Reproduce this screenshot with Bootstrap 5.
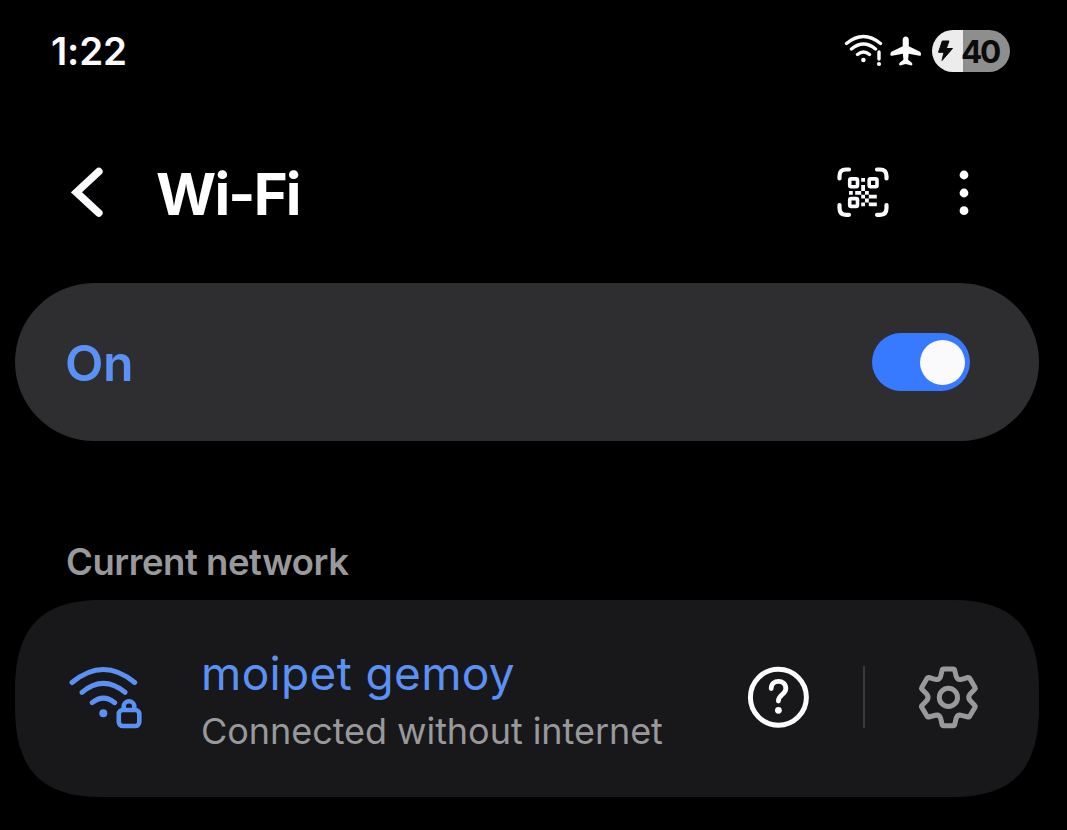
<!DOCTYPE html>
<html lang="en" data-bs-theme="dark">
<head>
<meta charset="utf-8">
<meta name="viewport" content="width=device-width, initial-scale=1">
<title>Wi-Fi</title>
<link href="https://cdn.jsdelivr.net/npm/bootstrap@5.3.0/dist/css/bootstrap.min.css" rel="stylesheet">
<style>
  body { background: #000; color: #fcfcff; font-family: Inter, "Liberation Sans", sans-serif; overflow: hidden; }
  svg { display: block; flex: none; }
  .status-bar { height: 102px; padding: 0 57px 0 51px; }
  .clock { font-size: 38.5px; font-weight: 600; letter-spacing: -.2px; padding-top: 1px; }
  .battery { width: 78px; height: 42px; padding-left: 29px; color: #0b0b0b; font-size: 31.5px; font-weight: 700; line-height: 43px; letter-spacing: -2.4px;
    background: linear-gradient(90deg, #ececec 31px, #8e8e8e 31px); position: relative; }
  .battery svg { position: absolute; left: 5px; top: 10px; }
  .app-bar { height: 181px; padding: 0 97px 0 71px; }
  .page-title { font-size: 58px; font-weight: 700; line-height: 70px; margin: 3px 0 0 52px; letter-spacing: -1.8px; }
  .switch-card { height: 158px; margin: 0 28px 0 15px; padding: 0 69px 0 50px; background: #2e2e30; border-radius: 79px; }
  .switch-label { font-size: 50px; font-weight: 600; color: #5b91f5; line-height: 60px; padding-top: 2px; letter-spacing: -.4px; }
  .toggle { width: 98px; height: 58px; background: #387aff; padding: 0 5px; }
  .knob { width: 45px; height: 45px; background: #fafafc; }
  .section-label { margin: 98px 0 0 66px; height: 61px; line-height: 46px; font-size: 36.5px; font-weight: 600; letter-spacing: -.46px; color: #99999c; }
  .network-card { height: 197px; margin: 0 28px 0 15px; padding: 0 60px 3px 54px; background: #18181a;
    clip-path: path("M0 90C0 27 27 0 86 0H938C997 0 1024 27 1024 90V107C1024 170 997 197 938 197H86C27 197 0 170 0 107Z"); }
  .network-text { margin-left: 58px; width: 548px; padding-top: 10px; }
  .network-name { font-size: 46px; line-height: 58px; color: #5b91f5; letter-spacing: .35px; }
  .network-state { font-size: 36px; line-height: 59px; color: #99999c; letter-spacing: -.05px; }
  .rule { width: 2px; height: 62px; background: #39393b; margin: 0 52px 0 54px; }
</style>
</head>
<body>
<header class="status-bar d-flex align-items-center justify-content-between">
  <div class="clock" id="clock">1:22</div>
  <div class="d-flex align-items-center">
    <svg width="40" height="36" viewBox="844 33 40 36" fill="none" stroke="#fcfcfc" stroke-width="3.400" stroke-linecap="round">
      <path d="M846.500 43.500Q863.500 29.500 880.500 43.500M851.500 49Q863.500 39 875.500 49M857.500 54.500Q863.500 49.500 869.500 54.500M879 52V59"/>
      <circle cx="863.400" cy="60" r="2.300" fill="#fcfcfc" stroke="none"/><circle cx="879" cy="64" r="2.100" fill="#fcfcfc" stroke="none"/>
    </svg>
    <svg width="34" height="36" viewBox="889 33 34 36" fill="#fcfcfc" style="margin-left:5px">
      <path d="M905.700 36.500C904 36.500 902.700 38 902.700 40V46.200L891.500 51.700Q890.200 52.700 890.300 55Q890.500 56 892 55.700L902.900 53.800L903.400 59.800L899.400 63Q898.500 65.200 900 65.500L905.700 63.900L911.500 65.500Q912.900 65.200 912.100 63L908.100 59.800L908.700 53.800L919.500 55.700Q920.900 56 921 55Q921.200 52.700 920 51.700L908.800 46.200V40C908.800 38 907.500 36.500 905.700 36.500Z"/>
    </svg>
    <div class="battery rounded-pill" style="margin-left:9px">
      <svg width="18" height="22" viewBox="0 0 18 22"><path d="M5.300 1H12L9.300 8.500H15.500L5 20.500L7 12.300H1.500Z" fill="#0b0b0b" stroke="#0b0b0b" stroke-width="1" stroke-linejoin="round"/></svg>
      <span>40</span>
    </div>
  </div>
</header>

<nav class="app-bar d-flex align-items-center">
  <svg width="33" height="50" viewBox="71 167 33 50" style="margin-top:-1px"><path d="M98.800 171.500L76.500 192.300L98.800 213" fill="none" stroke="#fcfcff" stroke-width="7.600" stroke-linecap="round" stroke-linejoin="miter"/></svg>
  <h1 class="page-title"><span>Wi-Fi</span></h1>
  <svg class="ms-auto" width="54" height="54" viewBox="836 165 54 54" fill="none" stroke="#fcfcff" stroke-width="4.200" stroke-linecap="round" style="margin-top:-1px">
    <path d="M839.500 178.500V176Q839.500 169.500 846 169.500H849M877 169.500H880Q886.500 169.500 886.500 176V178.500M886.500 205V208Q886.500 214.800 880 214.800H877M849 214.800H846Q839.500 214.800 839.500 208V205"/>
    <g stroke-width="3.600"><rect x="849.700" y="178.900" width="7.800" height="7.800" rx="1.500"/><rect x="869.200" y="178.900" width="7.800" height="7.800" rx="1.500"/><rect x="849.700" y="198.600" width="7.800" height="7.800" rx="1.500"/></g>
    <path fill="#fcfcff" stroke="none" d="M861.200 178h3.800v3.800h-3.800zM861.200 185h3.800v6h-3.800zM849 191h3.800v3.800h-3.800zM855.200 191h6v3.800h-6zM865 191h3.800v3.800h-3.800zM861.200 194.800h3.800v3.800h-3.800zM868.800 194.800h8v3.800h-8zM865 198.600h3.800v3.800h-3.800zM861.200 202.400h3.800v3.800h-3.800zM868.800 202.400h8v3.800h-8z"/>
  </svg>
  <svg width="12" height="46" viewBox="0 0 12 46" fill="#fcfcff" style="margin-left:68px"><circle cx="6" cy="5" r="4.400"/><circle cx="6" cy="23" r="4.400"/><circle cx="6" cy="40.700" r="4.400"/></svg>
</nav>

<main>
  <section class="switch-card d-flex align-items-center justify-content-between">
    <div class="switch-label"><span>On</span></div>
    <div class="toggle rounded-pill d-flex align-items-center justify-content-end"><div class="knob rounded-circle"></div></div>
  </section>

  <h2 class="section-label"><span>Current network</span></h2>
  <section class="network-card d-flex align-items-center">
    <svg width="74" height="64" viewBox="69 665 74 64" fill="none" stroke="#5b91f5" stroke-width="5" stroke-linecap="round">
      <path d="M72 682.500Q103.300 656.500 134.700 682.500M82 692.300Q103.300 674.500 125 692.300M92.200 702.700Q103.300 693.500 114.700 702.700"/>
      <circle cx="103.300" cy="713.300" r="4" fill="#5b91f5" stroke="none"/>
      <g stroke-width="4.600"><rect x="118.800" y="710" width="20.500" height="16" rx="4"/><path d="M123.700 709V706.500a5.300 5.300 0 0 1 10.600 0V709" stroke-linecap="butt"/></g>
    </svg>
    <div class="network-text text-nowrap">
      <div class="network-name"><span>moipet gemoy</span></div>
      <div class="network-state"><span>Connected without internet</span></div>
    </div>
    <svg width="62" height="62" viewBox="747 666 62 62" fill="none" stroke="#fcfcff" stroke-width="5" stroke-linecap="round">
      <circle cx="778.400" cy="697.300" r="28"/><path stroke-width="4.800" d="M771.200 688.500C771.200 679 785.800 679 785.800 688.500C785.800 694.500 778.400 694.500 778.400 701"/><circle cx="778.400" cy="710.300" r="3.400" fill="#fcfcff" stroke="none"/>
    </svg>
    <div class="rule"></div>
    <svg width="62" height="64" viewBox="917 665 62 64" fill="none" stroke="#99999c" stroke-width="5" stroke-linejoin="round">
      <path d="M943.500 669H953.300Q954.300 669 954.600 670L956.200 676.500Q957.500 680.300 961.500 679.300L968 677.500Q969 677.300 969.700 678.300L975.100 687.500Q975.600 688.300 974.800 689.200L970.100 694Q967.300 697.300 970.100 700.600L974.800 705.500Q975.600 706.300 975.100 707.200L969.700 716.300Q969 717.300 968 717L961.500 715.300Q957.500 714.300 956.200 718.200L954.600 724.800Q954.300 725.800 953.300 725.800H943.500Q942.500 725.800 942.200 724.800L940.600 718.200Q939.300 714.300 935.300 715.300L928.800 717Q927.800 717.300 927.100 716.300L921.700 707.200Q921.200 706.300 922 705.500L926.700 700.600Q929.500 697.300 926.700 694L922 689.200Q921.200 688.300 921.700 687.500L927.100 678.300Q927.800 677.300 928.800 677.500L935.300 679.300Q939.300 680.300 940.600 676.500L942.200 670Q942.500 669 943.500 669Z"/>
      <circle cx="948.400" cy="697.400" r="9.100"/>
    </svg>
  </section>
</main>
<script src="https://cdn.jsdelivr.net/npm/bootstrap@5.3.0/dist/js/bootstrap.bundle.min.js"></script>
</body>
</html>
